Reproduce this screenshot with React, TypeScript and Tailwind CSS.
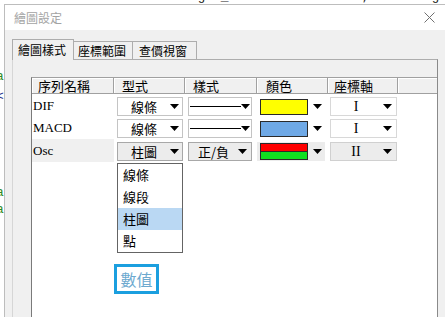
import React from "react";

function Arrow() {
  return (
    <svg width="9" height="5" viewBox="0 0 9 5" className="shrink-0">
      <path d="M0 0H9L4.5 5Z" fill="#000" />
    </svg>
  );
}

function TypeCombo({ label, active }: { label: string; active?: boolean }) {
  return (
    <div
      className={
        active
          ? "flex h-[19px] w-[66px] items-center border border-[#a8a8a8] bg-[#ececec]"
          : "flex h-[19px] w-[66px] items-center border border-[#c4c4c4] bg-white"
      }
    >
      <span className="flex-1 text-center text-[13px] leading-[17px] text-black">{label}</span>
      <span className="mr-[3px] flex">
        <Arrow />
      </span>
    </div>
  );
}

function StyleCombo({ label, active }: { label?: string; active?: boolean }) {
  return (
    <div
      className={
        active
          ? "flex h-[19px] w-[64px] items-center border border-[#a8a8a8] bg-[#ececec]"
          : "flex h-[19px] w-[64px] items-center border border-[#c4c4c4] bg-white"
      }
    >
      {label ? (
        <span className="ml-[6px] flex-1 text-center text-[13px] leading-[17px] text-black">{label}</span>
      ) : (
        <span className="ml-[1px] h-px w-[51px] bg-black" />
      )}
      <span className={label ? "mr-[4px] ml-[6px] flex" : "ml-auto mr-[1px] flex"}>
        <Arrow />
      </span>
    </div>
  );
}

function ColorCombo({ kind, active }: { kind: "yellow" | "blue" | "rg"; active?: boolean }) {
  return (
    <div
      className={
        active
          ? "flex h-[19px] w-[68px] items-center bg-[#ececec]"
          : "flex h-[19px] w-[68px] items-center bg-white"
      }
    >
      {kind === "yellow" && (
        <span className="ml-[3px] h-[16px] w-[48px] border border-[#2a2a2a] bg-[#ffff00]" />
      )}
      {kind === "blue" && (
        <span className="ml-[3px] h-[16px] w-[48px] border border-[#2a2a2a] bg-[#6fa9e6]" />
      )}
      {kind === "rg" && (
        <span className="ml-[3px] flex h-[17px] w-[48px] flex-col border border-[#2a2a2a]">
          <span className="h-[7px] bg-[#ff0000]" />
          <span className="h-px bg-[#2a2a2a]" />
          <span className="flex-1 bg-[#10e020]" />
        </span>
      )}
      <span className="ml-[5px] flex">
        <Arrow />
      </span>
    </div>
  );
}

function AxisCombo({ label, active }: { label: string; active?: boolean }) {
  return (
    <div
      className={
        active
          ? "flex h-[19px] w-[67px] items-center border border-[#d0d0d0] bg-[#ececec]"
          : "flex h-[19px] w-[67px] items-center border border-[#d8d8d8] bg-white"
      }
    >
      <span className="flex-1 text-center font-['Liberation_Serif',serif] text-[14px] leading-[17px] text-black">
        {label}
      </span>
      <span className="mr-[4px] ml-[2px] flex">
        <Arrow />
      </span>
    </div>
  );
}

function HeaderCell({ label, w, last }: { label?: string; w: string; last?: boolean }) {
  return (
    <div
      className={
        (last
          ? "flex-1 border-b border-[#a0a0a0]"
          : "border-r border-b border-[#a0a0a0]") +
        " h-[16px] bg-[#f0f0f0] pl-[6px] text-[13px] leading-[15px] text-black shadow-[inset_1px_1px_0_#ffffff] " +
        w
      }
    >
      {label}
    </div>
  );
}

type RowProps = {
  name: string;
  type: string;
  style?: string;
  color: "yellow" | "blue" | "rg";
  axis: string;
  active?: boolean;
  h: string;
};

function DataRow({ name, type, style, color, axis, active, h }: RowProps) {
  return (
    <div className={"flex " + h}>
      <div
        className={
          active
            ? "w-[82px] bg-[#f0f0f0] pl-[1px] pt-[4px] font-['Liberation_Serif',serif] text-[13px] leading-[15px] text-black"
            : "w-[82px] pl-[1px] pt-[4px] font-['Liberation_Serif',serif] text-[13px] leading-[15px] text-black"
        }
      >
        {name}
      </div>
      <div className="relative w-[71px] pl-[3px] pt-[3px]">
        <TypeCombo label={type} active={active} />
        {active && (
          <div className="absolute left-[3px] top-[24px] z-10 flex w-[66px] flex-col border border-[#646464] bg-white">
            <div className="h-[22px] pl-[5px] text-[13px] leading-[22px] text-black">線條</div>
            <div className="h-[22px] pl-[5px] text-[13px] leading-[22px] text-black">線段</div>
            <div className="h-[22px] bg-[#bad8f3] pl-[5px] text-[13px] leading-[22px] text-black">柱圖</div>
            <div className="h-[22px] pl-[5px] text-[13px] leading-[22px] text-black">點</div>
          </div>
        )}
      </div>
      <div className="w-[72px] pl-[3px] pt-[3px]">
        <StyleCombo label={style} active={active} />
      </div>
      <div className="w-[71px] pl-[0px] pt-[3px]">
        <ColorCombo kind={color} active={active} />
      </div>
      <div className="w-[70px] pl-[2px] pt-[3px]">
        <AxisCombo label={axis} active={active} />
      </div>
    </div>
  );
}

export default function App() {
  return (
    <div className="relative h-[317px] w-[445px] overflow-hidden bg-white font-['Noto_Sans_CJK_TC','Noto_Sans',sans-serif]">
      {/* code editor behind the dialog */}
      <div className="flex flex-col whitespace-nowrap font-['Liberation_Mono',monospace] text-[13px] leading-[17px]">
        <div className="-mt-[12px] ml-[96px] text-[#1a1a1a]">
          Lr2 = FastLength_ssss ==== Vaiue2 ;= XAverage(Value1)
        </div>
        <div className="mt-[63px] -ml-[4px] text-[#2e8b22]">a</div>
        <div className="mt-[3px] -ml-[4px] text-[#1c2f8a]">&lt;</div>
        <div className="mt-[79px] -ml-[4px] text-[#2e8b22]">a</div>
        <div className="-ml-[4px] text-[#2e8b22]">a</div>
      </div>

      {/* dialog window */}
      <div className="absolute left-[4px] top-[4px] flex h-[330px] w-[441px] flex-col border-l border-t border-[#bdbdbd] bg-[#f0f0f0]">
        {/* title bar */}
        <div className="flex h-[25px] shrink-0 items-center justify-between bg-white pl-[9px]">
          <span className="text-[12px] leading-[14px] text-[#a3a3a3]">繪圖設定</span>
          <svg width="11" height="11" viewBox="0 0 11 11" className="mr-[10px]">
            <path d="M0.5 0.5L10.5 10.5M10.5 0.5L0.5 10.5" stroke="#707070" strokeWidth="1" />
          </svg>
        </div>

        {/* tabs */}
        <div className="flex h-[29px] shrink-0 items-end pl-[7px]">
          <div className="relative z-10 -mb-px h-[21px] w-[62px] border-l border-r border-t border-[#adadad] bg-[#f0f0f0] pl-[5px] text-[12px] leading-[19px] text-black">
            繪圖樣式
          </div>
          <div className="h-[18px] w-[59px] border-r border-t border-[#adadad] bg-[#f0f0f0] pl-[4px] text-[12px] leading-[17px] text-black">
            座標範圍
          </div>
          <div className="h-[18px] w-[64px] border-r border-t border-[#adadad] bg-[#f0f0f0] pl-[6px] text-[12px] leading-[17px] text-black">
            查價視窗
          </div>
        </div>

        {/* tab panel */}
        <div className="ml-[7px] flex w-[426px] flex-1 flex-col border-l border-r border-t border-l-[#d6d6d6] border-r-[#8a8a8a] border-t-[#adadad] bg-[#f0f0f0] pl-[18px] pt-[17px]">
          <div className="relative flex w-[406px] flex-1 flex-col border-l border-t border-l-[#7a7a7a] border-t-[#a0a0a0] bg-white">
            <div className="flex">
              <HeaderCell label="序列名稱" w="w-[82px]" />
              <HeaderCell label="型式" w="w-[71px] pl-[8px]" />
              <HeaderCell label="樣式" w="w-[72px] pl-[8px]" />
              <HeaderCell label="顏色" w="w-[71px] pl-[9px]" />
              <HeaderCell label="座標軸" w="w-[70px]" />
              <HeaderCell w="" last />
            </div>
            <DataRow name="DIF" type="線條" color="yellow" axis="I" h="h-[22px]" />
            <DataRow name="MACD" type="線條" color="blue" axis="I" h="h-[23px]" />
            <DataRow name="Osc" type="柱圖" style="正/負" color="rg" axis="II" active h="h-[23px]" />

            {/* value tooltip */}
            <div className="absolute left-[82px] top-[186px] flex h-[30px] w-[45px] items-center justify-center border-[3px] border-[#1b9fdf] bg-white text-[16px] leading-[20px] text-[#6da9cf]">
              數值
            </div>
          </div>
        </div>
      </div>
    </div>
  );
}
